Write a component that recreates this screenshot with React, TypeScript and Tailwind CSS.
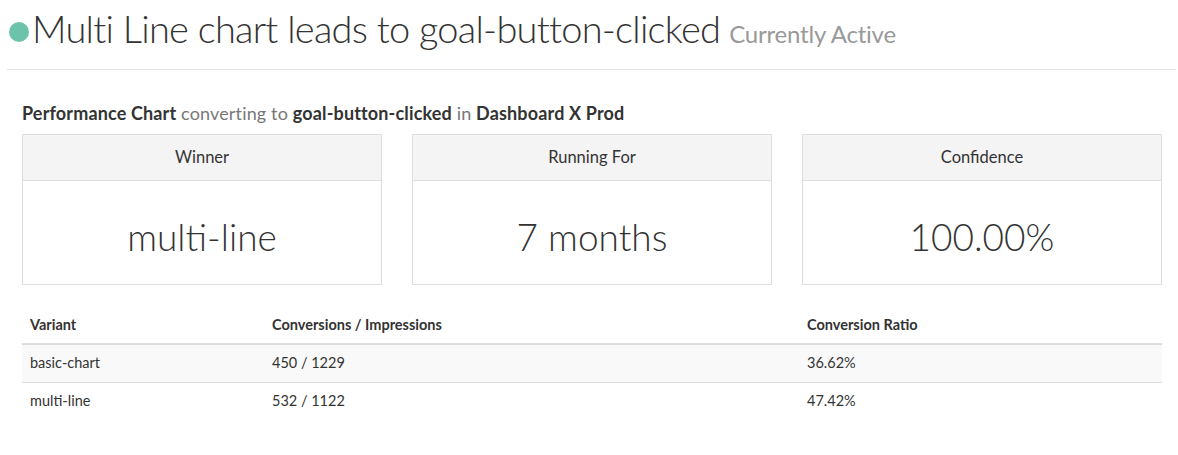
export default function App() {
  const font = { fontFamily: "Lato, 'Noto Sans', sans-serif" };
  return (
    <div className="w-[1178px] h-[455px] bg-white text-[#333]" style={font}>
      <div className="pl-[9px] pr-[2px]">
        <div className="flex items-baseline h-[70px] pt-[2px] border-b border-[#e5e5e5] ml-[-2px] pl-[2px]">
          <span className="w-[20px] h-[20px] rounded-full bg-[#6cc3a9] self-center mt-[-8px] shrink-0" />
          <h1 className="ml-[3px] text-[38px] tracking-[-0.75px] font-light leading-[52px] text-[#333]">Multi Line chart leads to goal-button-clicked</h1>
          <span className="ml-[9px] text-[24px] tracking-[-0.2px] text-[#999]">Currently Active</span>
        </div>
      </div>
      <div className="pl-[22px] pr-[16px]">
        <div className="mt-[31px] text-[18px] tracking-[0.15px] leading-[24px] text-[#333]">
          <span className="font-bold">Performance Chart</span>
          <span className="text-[#777]"> converting to </span>
          <span className="font-bold">goal-button-clicked</span>
          <span className="text-[#777]"> in </span>
          <span className="font-bold">Dashboard X Prod</span>
        </div>
        <div className="mt-[9px] grid grid-cols-3 gap-[30px]">
          {[
            ["Winner", "multi-line"],
            ["Running For", "7 months"],
            ["Confidence", "100.00%"],
          ].map(([h, v]) => (
            <div key={h} className="border border-[#ddd]">
              <div className="h-[46px] bg-[#f4f4f4] border-b border-[#ddd] flex items-center justify-center text-[16.5px] text-[#333]">{h}</div>
              <div className="h-[103px] flex items-center justify-center text-[37px] font-light text-[#333] pt-[8px]">{v}</div>
            </div>
          ))}
        </div>
        <table className="mt-[21px] w-full text-[14.5px] text-[#333] border-collapse">
          <thead>
            <tr className="border-b-2 border-[#ddd]">
              <th className="text-left font-bold px-[8px] h-[38px] w-[242px]">Variant</th>
              <th className="text-left font-bold px-[8px] w-[535px]">Conversions / Impressions</th>
              <th className="text-left font-bold px-[8px]">Conversion Ratio</th>
            </tr>
          </thead>
          <tbody>
            <tr className="bg-[#f9f9f9] border-b border-[#ddd]">
              <td className="px-[8px] h-[38px]">basic-chart</td>
              <td className="px-[8px]">450 / 1229</td>
              <td className="px-[8px]">36.62%</td>
            </tr>
            <tr>
              <td className="px-[8px] h-[38px]">multi-line</td>
              <td className="px-[8px]">532 / 1122</td>
              <td className="px-[8px]">47.42%</td>
            </tr>
          </tbody>
        </table>
      </div>
    </div>
  );
}
